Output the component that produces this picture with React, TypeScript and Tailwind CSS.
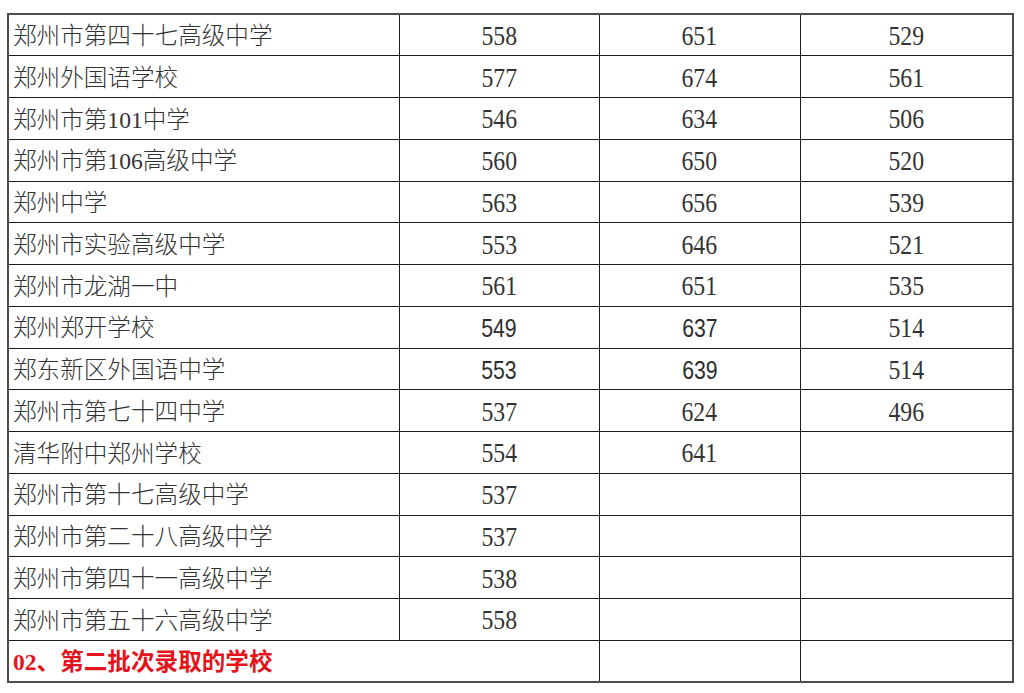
import React from "react";

type Row = {
  name: string;
  a?: string;
  b?: string;
  c?: string;
  sans?: boolean;
};

const rows: Row[] = [
  { name: "郑州市第四十七高级中学", a: "558", b: "651", c: "529" },
  { name: "郑州外国语学校", a: "577", b: "674", c: "561" },
  { name: "郑州市第101中学", a: "546", b: "634", c: "506" },
  { name: "郑州市第106高级中学", a: "560", b: "650", c: "520" },
  { name: "郑州中学", a: "563", b: "656", c: "539" },
  { name: "郑州市实验高级中学", a: "553", b: "646", c: "521" },
  { name: "郑州市龙湖一中", a: "561", b: "651", c: "535" },
  { name: "郑州郑开学校", a: "549", b: "637", c: "514", sans: true },
  { name: "郑东新区外国语中学", a: "553", b: "639", c: "514", sans: true },
  { name: "郑州市第七十四中学", a: "537", b: "624", c: "496" },
  { name: "清华附中郑州学校", a: "554", b: "641" },
  { name: "郑州市第十七高级中学", a: "537" },
  { name: "郑州市第二十八高级中学", a: "537" },
  { name: "郑州市第四十一高级中学", a: "538" },
  { name: "郑州市第五十六高级中学", a: "558" },
];

function Num({ v, sans }: { v?: string; sans?: boolean }) {
  if (!v) return null;
  if (sans) {
    return (
      <span className="inline-block scale-x-[0.85] font-['Liberation_Sans',sans-serif] text-[25px] text-[#2e2e2e]">
        {v}
      </span>
    );
  }
  return (
    <span className="inline-block scale-x-[0.88] font-['Liberation_Serif',serif] text-[27px] text-[#333]">
      {v}
    </span>
  );
}

export default function App() {
  const cell = "border border-[#1c1c1c] p-0 pt-[3px] text-center align-middle leading-none";
  return (
    <div className="h-[693px] w-[1024px] bg-white pt-[13px] pl-[7px]">
      <table className="w-[1005px] table-fixed border-collapse border-2 border-[#4d4d4d]">
        <colgroup>
          <col className="w-[391px]" />
          <col className="w-[200px]" />
          <col className="w-[201px]" />
          <col className="w-[213px]" />
        </colgroup>
        <tbody>
          {rows.map((r) => (
            <tr key={r.name} className="h-[41.75px]">
              <td className="border border-[#1c1c1c] p-0 pt-[4px] pl-[4px] text-left align-middle leading-none">
                <span className="font-['Liberation_Serif','Noto_Sans_CJK_SC',serif] text-[23.6px] font-light text-[#333]">
                  {r.name}
                </span>
              </td>
              <td className={cell}>
                <Num v={r.a} sans={r.sans} />
              </td>
              <td className={cell}>
                <Num v={r.b} sans={r.sans} />
              </td>
              <td className={cell}>
                <Num v={r.c} />
              </td>
            </tr>
          ))}
          <tr className="h-[41.75px]">
            <td
              colSpan={2}
              className="border border-[#1c1c1c] p-0 pt-[3px] pl-[4px] text-left align-middle leading-none"
            >
              <span className="font-['Liberation_Serif','Noto_Sans_CJK_SC',serif] text-[23.6px] font-bold text-[#e3141c]">
                02、第二批次录取的学校
              </span>
            </td>
            <td className={cell}></td>
            <td className={cell}></td>
          </tr>
        </tbody>
      </table>
    </div>
  );
}
